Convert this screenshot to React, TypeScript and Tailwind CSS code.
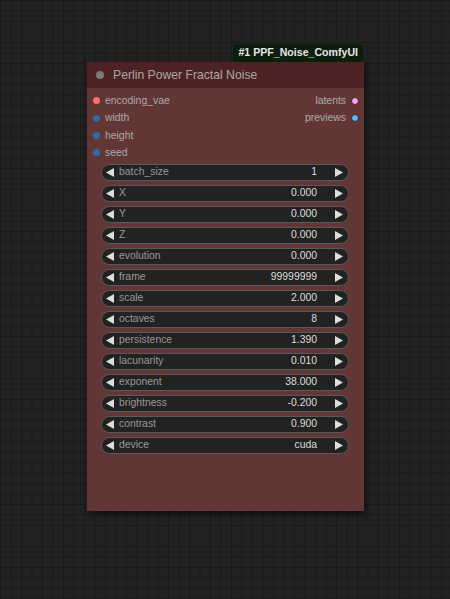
const INPUTS = [
  { name: "encoding_vae", color: "bg-[#ff6e6e]" },
  { name: "width", color: "bg-[#2a6ba8]" },
  { name: "height", color: "bg-[#2a6ba8]" },
  { name: "seed", color: "bg-[#2a6ba8]" },
];

const OUTPUTS = [
  { name: "latents", color: "bg-[#ff9cf9]" },
  { name: "previews", color: "bg-[#64b5f6]" },
];

const WIDGETS: [string, string][] = [
  ["batch_size", "1"],
  ["X", "0.000"],
  ["Y", "0.000"],
  ["Z", "0.000"],
  ["evolution", "0.000"],
  ["frame", "99999999"],
  ["scale", "2.000"],
  ["octaves", "8"],
  ["persistence", "1.390"],
  ["lacunarity", "0.010"],
  ["exponent", "38.000"],
  ["brightness", "-0.200"],
  ["contrast", "0.900"],
  ["device", "cuda"],
];

function Arrow({ dir }: { dir: "left" | "right" }) {
  return (
    <svg width="8" height="9" viewBox="0 0 8 9" className="shrink-0">
      {dir === "left" ? (
        <polygon points="8,0 8,9 0,4.5" fill="#dddddd" />
      ) : (
        <polygon points="0,0 0,9 8,4.5" fill="#dddddd" />
      )}
    </svg>
  );
}

function Widget({ label, value }: { label: string; value: string }) {
  return (
    <div className="flex h-[17px] items-center rounded-full border border-[#5a5a5a] bg-[#222222] pl-[4px] pr-[5px]">
      <Arrow dir="left" />
      <span className="ml-[5px] flex-1 text-[#999999]">{label}</span>
      <span className="text-[#dddddd]">{value}</span>
      <span className="ml-[18px]">
        <Arrow dir="right" />
      </span>
    </div>
  );
}

export default function App() {
  return (
    <div
      className="h-[599px] w-[450px] overflow-hidden bg-[#222222] bg-[linear-gradient(to_right,#1a1a1a_1px,transparent_1px),linear-gradient(to_bottom,#1a1a1a_1px,transparent_1px)] bg-[size:10.5px_10.5px] pl-[87px] pt-[44px]"
      style={{ fontFamily: '"Liberation Sans", Arial, sans-serif' }}
    >
      <div className="w-[277px]">
        {/* badge */}
        <div className="flex justify-end pr-[1px]">
          <div className="flex h-[18px] items-center rounded-t-[4px] bg-[#0e1e0e] px-[5px] text-[10.6px] font-bold text-[#e6e6e6]">
            #1 PPF_Noise_ComfyUI
          </div>
        </div>

        {/* node */}
        <div className="shadow-[2px_3px_6px_rgba(0,0,0,0.5)]">
          <div className="flex h-[26px] items-center bg-[#4e2222] pl-[9px] text-[12.2px] text-[#a8a8a8]">
            <span className="h-[8px] w-[8px] rounded-full bg-[#7a7a7a]" />
            <span className="ml-[9px]">Perlin Power Fractal Noise</span>
          </div>

          <div className="bg-[#633636] pb-[57px] text-[10.4px]">
            {/* slots */}
            <div className="flex pt-[4px]">
              <div className="flex flex-1 flex-col">
                {INPUTS.map((s) => (
                  <div key={s.name} className="flex h-[17.4px] items-center pl-[6px] text-[#aaaaaa]">
                    <span className={`h-[7px] w-[7px] rounded-full ${s.color}`} />
                    <span className="ml-[5px]">{s.name}</span>
                  </div>
                ))}
              </div>
              <div className="flex flex-col">
                {OUTPUTS.map((s) => (
                  <div key={s.name} className="flex h-[17.4px] items-center justify-end pr-[5px] text-[#aaaaaa]">
                    <span className="mr-[5px]">{s.name}</span>
                    <span className={`box-content h-[6px] w-[6px] rounded-full border border-[#2a2a2a] ${s.color}`} />
                  </div>
                ))}
              </div>
            </div>

            {/* widgets */}
            <div className="mt-[2px] flex flex-col gap-[4px] pl-[14px] pr-[15px]">
              {WIDGETS.map(([l, v]) => (
                <Widget key={l} label={l} value={v} />
              ))}
            </div>
          </div>
        </div>
      </div>
    </div>
  );
}
